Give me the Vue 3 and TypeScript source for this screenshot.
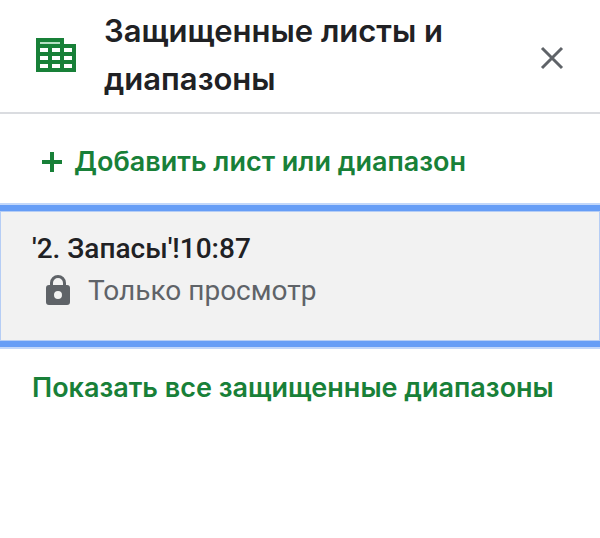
<script setup lang="ts">
interface ProtectedRange {
  id: number
  name: string
  access: string
}

const ranges: ProtectedRange[] = [
  { id: 1, name: "'2. Запасы'!10:87", access: 'Только просмотр' },
]
</script>

<template>
  <aside class="panel">
    <header class="header">
      <svg class="sheet-icon" viewBox="0 0 40 34" aria-hidden="true">
        <path fill="#188038" fill-rule="evenodd" d="M0 0H28V6H40V34H0ZM4 10V14H12V10ZM16 10V14H24V10ZM28 10V14H36V10ZM4 18V22H12V18ZM16 18V22H24V18ZM28 18V22H36V18ZM4 26V30H12V26ZM16 26V30H24V26ZM28 26V30H36V26Z" />
        <path fill="#b7dfc3" d="M4 4H24V6H4Z" />
      </svg>
      <h1 class="title">Защищенные листы и диапазоны</h1>
      <button class="close" type="button" aria-label="Закрыть">
        <svg viewBox="0 0 24 24" aria-hidden="true">
          <path d="M2 2L22 22M22 2L2 22" stroke="#5f6368" stroke-width="3" />
        </svg>
      </button>
    </header>

    <button class="add" type="button">
      <svg viewBox="0 0 20 20" aria-hidden="true">
        <path d="M10 0V20M0 10H20" stroke="#188038" stroke-width="4" />
      </svg>
      Добавить лист или диапазон
    </button>

    <ul class="ranges">
      <li v-for="range in ranges" :key="range.id" class="item">
        <button class="range" type="button">
          <span class="name">{{ range.name }}</span>
          <span class="access">
            <svg viewBox="0 0 24 30" aria-hidden="true">
              <path fill="#5f6368" fill-rule="evenodd" d="M4 10V8A8 8 0 0 1 20 8V10H21A3 3 0 0 1 24 13V27A3 3 0 0 1 21 30H3A3 3 0 0 1 0 27V13A3 3 0 0 1 3 10ZM7 10H17V8A5 5 0 0 0 7 8ZM12 16A4 4 0 0 0 12 24A4 4 0 0 0 12 16Z" />
            </svg>
            {{ range.access }}
          </span>
        </button>
      </li>
    </ul>

    <a class="show-all" href="#">Показать все защищенные диапазоны</a>
  </aside>
</template>

<style>
body {
  margin: 0;
  background: #fff;
}
</style>

<style scoped>
.panel {
  font-family: Roboto, "Noto Sans", sans-serif;
  color: #202124;
}
.header {
  display: flex;
  align-items: center;
  padding: 7px 32px 9px 36px;
  border-bottom: 2px solid #dadce0;
}
.sheet-icon {
  flex: none;
  width: 40px;
  height: 34px;
}
.title {
  flex: 1;
  margin: 0 48px 0 28px;
  font: 600 31px/48px Inter, sans-serif;
}
.close {
  display: flex;
  margin-top: 6px;
  padding: 4px;
  border: 0;
  background: none;
}
.close svg {
  width: 24px;
  height: 24px;
}
.add {
  display: flex;
  align-items: center;
  gap: 12px;
  width: 100%;
  padding: 30px 42px 23px;
  border: 0;
  background: none;
  color: #188038;
  font: 600 27px/36px Inter, sans-serif;
  white-space: nowrap;
}
.add svg {
  width: 20px;
  height: 20px;
}
.ranges {
  margin: 0;
  padding: 0;
  list-style: none;
}
.item {
  border: solid #c2d7fa;
  border-width: 2px 0;
}
.range {
  display: block;
  width: 100%;
  padding: 17px 32px 29px;
  border: solid #669df6;
  border-width: 6px 0;
  background: #f2f2f2;
  box-shadow: inset 0 0 0 1px #b5cdf5;
  color: #202124;
  font: 500 28px/42px Roboto, sans-serif;
  text-align: left;
}
.name {
  display: block;
}
.access {
  display: flex;
  align-items: center;
  gap: 18px;
  padding-left: 14px;
  color: #5f6368;
  font-weight: 400;
}
.access svg {
  width: 24px;
  height: 30px;
  margin-bottom: 2px;
}
.show-all {
  display: block;
  padding: 21px 32px;
  color: #188038;
  font: 600 27px/36px Inter, sans-serif;
  text-decoration: none;
  white-space: nowrap;
}
</style>
